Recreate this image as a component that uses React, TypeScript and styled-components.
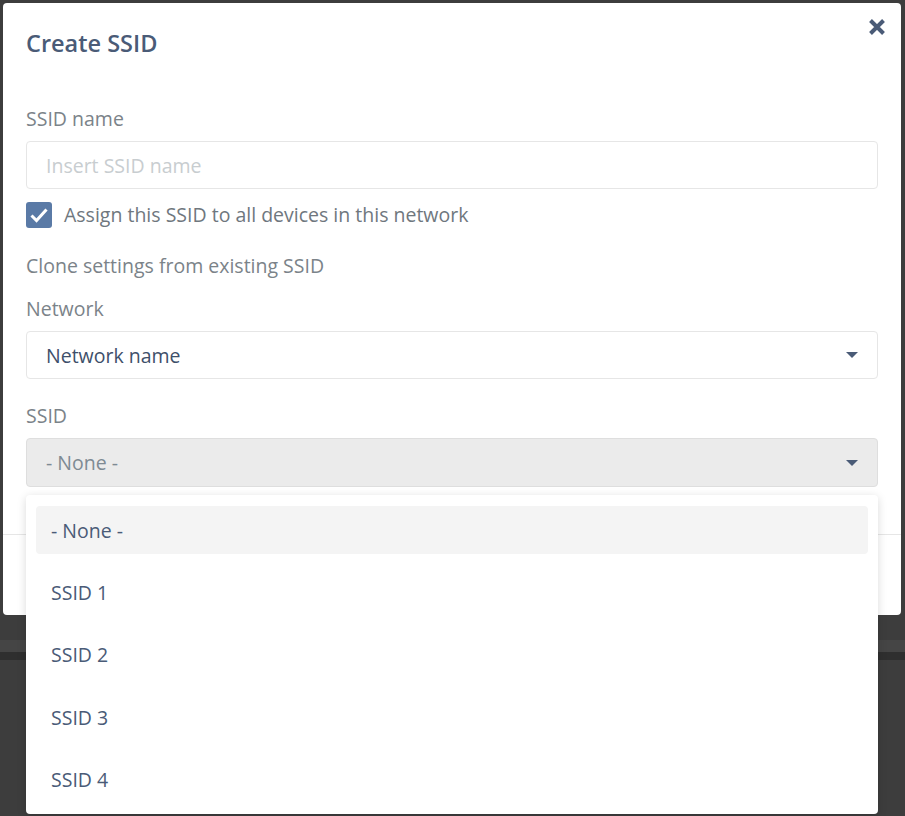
import React from 'react';
import styled, { createGlobalStyle } from 'styled-components';

const GlobalStyle = createGlobalStyle`
    html, body {
        margin: 0;
        padding: 0;
        background: #3d3d3d;
        font-family: 'Open Sans', 'Noto Sans', sans-serif;
    }
`;

const Page = styled.div`
    width: 905px;
    height: 816px;
    padding: 3px 4px 0 3px;
    box-sizing: border-box;
    background: linear-gradient(
        to bottom,
        #3d3d3d 0,
        #3d3d3d 640px,
        #454545 640px,
        #454545 652px,
        #2f2f2f 652px,
        #2f2f2f 660px,
        #3d3d3d 660px
    );
    overflow: hidden;
`;

const Modal = styled.div`
    position: relative;
    background: #ffffff;
    border-radius: 4px;
    width: 898px;
`;

const Header = styled.div`
    padding: 22px 23px 0;
`;

const Title = styled.h2`
    margin: 0;
    font-size: 23.5px;
    line-height: 36px;
    font-weight: 600;
    color: #4a5b77;
`;

const CloseButton = styled.button`
    position: absolute;
    top: 14px;
    right: 13px;
    width: 22px;
    height: 20px;
    padding: 0;
    border: none;
    background: none;
    display: flex;
    align-items: center;
    justify-content: center;
    cursor: pointer;
`;

const Body = styled.div`
    padding: 46px 23px 47px;
    display: flex;
    flex-direction: column;
`;

const Label = styled.div<{ $gap?: number }>`
    font-size: 19.5px;
    line-height: 24px;
    color: #7b8389;
    margin-top: ${(p) => p.$gap ?? 0}px;
    margin-bottom: 10px;
`;

const Field = styled.div<{ $disabled?: boolean }>`
    position: relative;
    height: ${(p) => (p.$disabled ? 49 : 48)}px;
    box-sizing: border-box;
    border: 1px solid ${(p) => (p.$disabled ? '#dedede' : '#e6e6e6')};
    border-radius: 4px;
    background: ${(p) => (p.$disabled ? '#ebebeb' : '#ffffff')};
    display: flex;
    align-items: center;
    padding: 0 19px;
`;

const Input = styled.input`
    border: none;
    outline: none;
    width: 100%;
    padding: 0;
    background: transparent;
    font-family: inherit;
    font-size: 19.5px;
    color: #3e4f6a;

    &::placeholder {
        color: #c8cdd0;
    }
`;

const SelectText = styled.span<{ $muted?: boolean }>`
    flex: 1;
    font-size: 19.5px;
    color: ${(p) => (p.$muted ? '#7e8a93' : '#3e4f6a')};
`;

const Caret = styled.span`
    width: 0;
    height: 0;
    border-left: 6px solid transparent;
    border-right: 6px solid transparent;
    border-top: 6px solid #4a5b77;
`;

const CheckRow = styled.label`
    display: flex;
    align-items: center;
    gap: 12px;
    margin-top: 12px;
    font-size: 19.5px;
    color: #6f777e;
`;

const CheckBox = styled.span`
    width: 26px;
    height: 26px;
    border-radius: 3px;
    background: #5a7aa6;
    display: flex;
    align-items: center;
    justify-content: center;
`;

const Footer = styled.div`
    border-top: 1px solid #e6e6e6;
    height: 80px;
`;

const SelectWrap = styled.div`
    position: relative;
`;

const Menu = styled.ul`
    position: absolute;
    top: calc(100% + 8px);
    left: 0;
    right: 0;
    margin: 0;
    padding: 11px 10px 10px;
    list-style: none;
    background: #ffffff;
    border-radius: 4px;
    box-shadow: 0 2px 10px rgba(0, 0, 0, 0.15);
    display: flex;
    flex-direction: column;
    gap: 14.4px;
    z-index: 2;
`;

const MenuItem = styled.li<{ $active?: boolean }>`
    height: 48px;
    display: flex;
    align-items: center;
    padding: 0 15px;
    border-radius: 4px;
    font-size: 19.5px;
    color: #4a5b77;
    background: ${(p) => (p.$active ? '#f4f4f4' : 'transparent')};
`;

const options = ['- None -', 'SSID 1', 'SSID 2', 'SSID 3', 'SSID 4'];

const App = () => (
    <Page>
        <GlobalStyle />
        <Modal>
            <Header>
                <Title>Create SSID</Title>
            </Header>
            <CloseButton aria-label="Close">
                <svg width="18" height="16" viewBox="0 0 18 16">
                    <path d="M2.5 1.5 L15.5 14.5 M15.5 1.5 L2.5 14.5" stroke="#4a5b77" strokeWidth="4" />
                </svg>
            </CloseButton>
            <Body>
                <Label>SSID name</Label>
                <Field>
                    <Input placeholder="Insert SSID name" />
                </Field>
                <CheckRow>
                    <CheckBox>
                        <svg width="20" height="16" viewBox="0 0 20 16">
                            <path d="M2.5 8.5 L7.5 13.5 L17.5 2.5" fill="none" stroke="#fff" strokeWidth="3" />
                        </svg>
                    </CheckBox>
                    Assign this SSID to all devices in this network
                </CheckRow>
                <Label $gap={26}>Clone settings from existing SSID</Label>
                <Label $gap={9}>Network</Label>
                <Field>
                    <SelectText>Network name</SelectText>
                    <Caret />
                </Field>
                <Label $gap={25}>SSID</Label>
                <SelectWrap>
                    <Field $disabled>
                        <SelectText $muted>- None -</SelectText>
                        <Caret />
                    </Field>
                    <Menu>
                        {options.map((o, i) => (
                            <MenuItem key={o} $active={i === 0}>
                                {o}
                            </MenuItem>
                        ))}
                    </Menu>
                </SelectWrap>
            </Body>
            <Footer />
        </Modal>
    </Page>
);

export default App;
